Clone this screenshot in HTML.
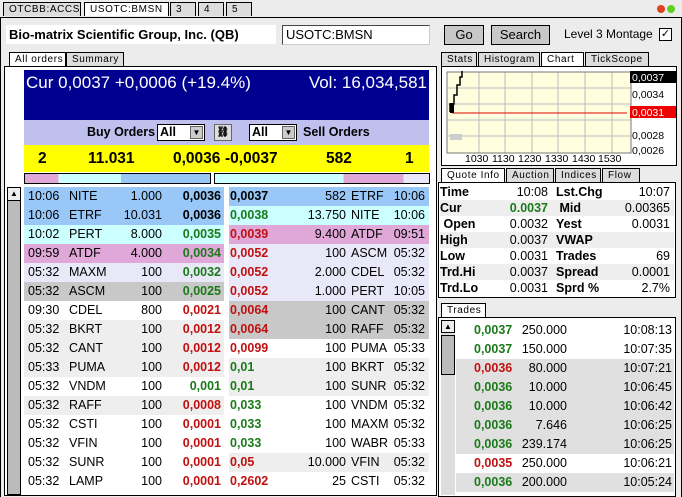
<!DOCTYPE html><html><head><style>
*{margin:0;padding:0;box-sizing:border-box}
body{width:682px;height:495px;background:#ececec;font-family:"Liberation Sans",sans-serif;position:relative;overflow:hidden;font-size:13px}
.a{position:absolute}
.tab{position:absolute;height:14px;border:1px solid #000;border-bottom:none;background:#ddd;font-size:10px;letter-spacing:.6px;padding:1px 0 0 5px;line-height:12px;white-space:nowrap;overflow:hidden}
.row{position:absolute;height:19px;line-height:19px;font-size:12.5px;width:200px}
.row span{position:absolute;white-space:nowrap}
.g{color:#1a7a1a;font-weight:bold}.r{color:#c01010;font-weight:bold}.k{font-weight:bold}
.qr{position:absolute;left:440px;width:234px;height:16px;line-height:16px;font-size:12.5px}
.qr span{position:absolute}
.tr{position:absolute;left:456px;width:218px;height:19px;line-height:19px;font-size:12.5px}
.tr span{position:absolute}
</style></head><body>
<div class="tab" style="left:3px;top:2px;width:78px;background:#ddd">OTCBB:ACCS</div>
<div class="tab" style="left:84px;top:2px;width:85px;background:#fff">USOTC:BMSN</div>
<div class="tab" style="left:170px;top:2px;width:26px">3</div>
<div class="tab" style="left:198px;top:2px;width:26px">4</div>
<div class="tab" style="left:226px;top:2px;width:26px">5</div>
<div class="a" style="left:657px;top:5px;width:8px;height:8px;border-radius:50%;background:#e04020"></div>
<div class="a" style="left:667px;top:5px;width:8px;height:8px;border-radius:50%;background:#60d020"></div>
<div class="a" style="left:0;top:17px;width:682px;height:480px;border:1px solid #000;border-bottom:none"></div>
<div class="a" style="left:6px;top:25px;width:270px;height:19px;background:#fff;font-weight:bold;font-size:13px;line-height:19px;padding-left:3px">Bio-matrix Scientific Group, Inc. (QB)</div>
<div class="a" style="left:282px;top:25px;width:148px;height:20px;background:#fff;border:1px solid #444;border-right-color:#ccc;border-bottom-color:#ccc;font-size:13px;line-height:18px;padding-left:3px">USOTC:BMSN</div>
<div class="a" style="left:444px;top:25px;width:40px;height:20px;background:#c8c8c8;border:1px solid #000;text-align:center;line-height:18px;font-size:13px">Go</div>
<div class="a" style="left:491px;top:25px;width:59px;height:20px;background:#c8c8c8;border:1px solid #000;text-align:center;line-height:18px;font-size:13px">Search</div>
<div class="a" style="left:564px;top:27px;font-size:12px;white-space:nowrap">Level 3 Montage</div>
<div class="a" style="left:659px;top:28px;width:13px;height:13px;background:#fff;border:1px solid #000;font-size:11px;line-height:11px;text-align:center">✓</div>
<div class="tab" style="left:9px;top:52px;width:57px;background:#fff">All orders</div>
<div class="tab" style="left:66px;top:52px;width:58px">Summary</div>
<div class="a" style="left:4px;top:66px;width:433px;height:430px;border:1px solid #000;background:#fff"></div>
<div class="a" style="left:24px;top:70px;width:405px;height:50px;background:#000090;color:#fff;font-size:17px;padding:3px 0 0 2px">Cur 0,0037 +0,0006 (+19.4%)<span style="position:absolute;right:2px">Vol: 16,034,581</span></div>
<div class="a" style="left:24px;top:120px;width:405px;height:25px;background:#bfc0ee;font-weight:bold;font-size:12.5px;line-height:25px">
<span class="a" style="left:63px">Buy Orders</span>
<span class="a" style="left:133px;top:4px;width:48px;height:17px;background:#fff;border:1px solid #000;line-height:15px;padding-left:2px">All<span class="a" style="right:1px;top:1px;width:13px;height:13px;background:#ccc;border:1px solid #666;font-size:8px;line-height:12px;text-align:center">▼</span></span>
<span class="a" style="left:190px;top:4px;width:18px;height:17px;background:#ddd;border:1px solid #666;font-size:10px;line-height:15px;text-align:center">⛓</span>
<span class="a" style="left:225px;top:4px;width:48px;height:17px;background:#fff;border:1px solid #000;line-height:15px;padding-left:2px">All<span class="a" style="right:1px;top:1px;width:13px;height:13px;background:#ccc;border:1px solid #666;font-size:8px;line-height:12px;text-align:center">▼</span></span>
<span class="a" style="left:279px">Sell Orders</span></div>
<div class="a" style="left:24px;top:145px;width:405px;height:27px;background:#ffff00;font-weight:bold;font-size:15.5px;line-height:27px">
<span class="a" style="left:14px">2</span><span class="a" style="left:64px">11.031</span><span class="a" style="left:149px">0,0036</span><span class="a" style="left:201px">-0,0037</span><span class="a" style="left:302px">582</span><span class="a" style="left:381px">1</span></div>
<div class="a" style="left:24px;top:173px;width:187px;height:11px;border:1px solid #000;background:linear-gradient(90deg,#e0a8d8 0 18%,#ccffff 18% 52%,#99c8f8 52%)"></div>
<div class="a" style="left:214px;top:173px;width:216px;height:11px;border:1px solid #000;background:linear-gradient(90deg,#ccffff 0 60%,#e0a8d8 60% 88%,#e8e8f8 88%)"></div>
<div class="a" style="left:7px;top:187px;width:14px;height:308px;background:#bbb;border:1px solid #000"></div>
<div class="a" style="left:8px;top:188px;width:12px;height:13px;background:#eee;border-bottom:1px solid #000;font-size:8px;text-align:center;line-height:12px">▲</div>
<div id="L"></div>
<div class="tab" style="left:441px;top:52px;width:36px">Stats</div>
<div class="tab" style="left:478px;top:52px;width:62px">Histogram</div>
<div class="tab" style="left:541px;top:52px;width:43px;background:#fff">Chart</div>
<div class="tab" style="left:585px;top:52px;width:64px">TickScope</div>
<div class="a" style="left:441px;top:66px;width:236px;height:100px;border:1px solid #000;background:#fff"></div>
<svg class="a" style="left:442px;top:67px" width="234" height="98">
<rect x="5" y="5" width="184" height="81" fill="#ffffe0"/>
<g stroke="#bbb" stroke-width="1">
<line x1="5" y1="21" x2="189" y2="21"/><line x1="5" y1="37" x2="189" y2="37"/><line x1="5" y1="53" x2="189" y2="53"/><line x1="5" y1="69" x2="189" y2="69"/>
<line x1="37" y1="5" x2="37" y2="86"/><line x1="63" y1="5" x2="63" y2="86"/><line x1="90" y1="5" x2="90" y2="86"/><line x1="116" y1="5" x2="116" y2="86"/><line x1="143" y1="5" x2="143" y2="86"/><line x1="170" y1="5" x2="170" y2="86"/></g>
<rect x="5" y="5" width="184" height="81" fill="none" stroke="#777"/>
<line x1="10" y1="46" x2="185" y2="46" stroke="#d00"/>
<path d="M8 45 V37 H12 V28 H15 V18 H18 V10 H20 V4 M10 45 V37" stroke="#000" fill="none" stroke-width="1.5"/>
<rect x="8" y="36" width="4" height="10" fill="#000"/>
<rect x="8" y="67" width="12" height="6" fill="#ccc"/>
<rect x="188" y="4" width="46" height="12" fill="#000"/><text x="190" y="14" fill="#fff" font-size="10.5" font-family="Liberation Sans">0,0037</text>
<g font-family="Liberation Sans" font-size="10.5"><text x="190" y="31">0,0034</text><text x="190" y="47">0,0032</text></g>
<rect x="188" y="39" width="46" height="12" fill="#e00"/><text x="190" y="49" fill="#fff" font-size="10.5" font-family="Liberation Sans">0,0031</text>
<g font-family="Liberation Sans" font-size="10.5"><text x="190" y="72">0,0028</text><text x="190" y="87">0,0026</text>
<text x="23" y="95">1030</text><text x="50" y="95">1130</text><text x="76" y="95">1230</text><text x="103" y="95">1330</text><text x="130" y="95">1430</text><text x="156" y="95">1530</text></g>
</svg>
<div class="tab" style="left:441px;top:168px;width:64px;background:#fff">Quote Info</div>
<div class="tab" style="left:506px;top:168px;width:48px">Auction</div>
<div class="tab" style="left:555px;top:168px;width:46px">Indices</div>
<div class="tab" style="left:602px;top:168px;width:38px">Flow</div>
<div class="a" style="left:438px;top:182px;width:238px;height:116px;border:1px solid #000;background:#fff"></div>
<div id="Q"></div>
<div class="tab" style="left:441px;top:303px;width:45px;background:#fff">Trades</div>
<div class="a" style="left:438px;top:317px;width:238px;height:180px;border:1px solid #000;background:#fff"></div>
<div class="a" style="left:441px;top:320px;width:14px;height:175px;background:#ddd"></div>
<div class="a" style="left:441px;top:320px;width:14px;height:13px;background:#eee;border:1px solid #000;font-size:8px;text-align:center;line-height:11px">▲</div>
<div class="a" style="left:441px;top:335px;width:14px;height:40px;background:#bbb;border:1px solid #000"></div>
<div id="T"></div>
<script>
var b=[["10:06","NITE","1.000","0,0036","k","#99c8f8"],["10:06","ETRF","10.031","0,0036","k","#99c8f8"],["10:02","PERT","8.000","0,0035","g","#ccffff"],["09:59","ATDF","4.000","0,0034","g","#e0a8d8"],["05:32","MAXM","100","0,0032","g","#e8e8f8"],["05:32","ASCM","100","0,0025","g","#c8c8c8"],["09:30","CDEL","800","0,0021","r","#fff"],["05:32","BKRT","100","0,0012","r","#eee"],["05:32","CANT","100","0,0012","r","#eee"],["05:33","PUMA","100","0,0012","r","#eee"],["05:32","VNDM","100","0,001","g","#fff"],["05:32","RAFF","100","0,0008","r","#eee"],["05:32","CSTI","100","0,0001","r","#fff"],["05:32","VFIN","100","0,0001","r","#fff"],["05:32","SUNR","100","0,0001","r","#fff"],["05:32","LAMP","100","0,0001","r","#fff"]];
var s=[["0,0037","k","582","ETRF","10:06","#99c8f8"],["0,0038","g","13.750","NITE","10:06","#ccffff"],["0,0039","r","9.400","ATDF","09:51","#e0a8d8"],["0,0052","r","100","ASCM","05:32","#e8e8f8"],["0,0052","r","2.000","CDEL","05:32","#e8e8f8"],["0,0052","r","1.000","PERT","10:05","#e8e8f8"],["0,0064","r","100","CANT","05:32","#c8c8c8"],["0,0064","r","100","RAFF","05:32","#c8c8c8"],["0,0099","r","100","PUMA","05:33","#fff"],["0,01","g","100","BKRT","05:32","#eee"],["0,01","g","100","SUNR","05:32","#eee"],["0,033","g","100","VNDM","05:32","#fff"],["0,033","g","100","MAXM","05:32","#fff"],["0,033","g","100","WABR","05:33","#fff"],["0,05","r","10.000","VFIN","05:32","#eee"],["0,2602","r","25","CSTI","05:32","#fff"]];
var h="";
b.forEach(function(r,i){var y=187+i*19;h+='<div class="row" style="left:24px;top:'+y+'px;background:'+r[5]+'"><span style="left:4px">'+r[0]+'</span><span style="left:45px">'+r[1]+'</span><span style="right:62px">'+r[2]+'</span><span class="'+r[4]+'" style="right:3px">'+r[3]+'</span></div>';});
s.forEach(function(r,i){var y=187+i*19;h+='<div class="row" style="left:229px;top:'+y+'px;background:'+r[5]+'"><span class="'+r[1]+'" style="left:1px">'+r[0]+'</span><span style="right:83px">'+r[2]+'</span><span style="left:122px">'+r[3]+'</span><span style="right:4px">'+r[4]+'</span></div>';});
document.getElementById("L").innerHTML=h;
var q=[["Time","10:08","Lst.Chg","10:07"],["Cur","0.0037"," Mid","0.00365"],[" Open","0.0032","Yest","0.0031"],["High","0.0037","VWAP",""],["Low","0.0031","Trades","69"],["Trd.Hi","0.0037","Spread","0.0001"],["Trd.Lo","0.0031","Sprd %","2.7%"]];
h="";q.forEach(function(r,i){h+='<div class="qr" style="top:'+(184+i*16)+'px;background:'+(i%2?'#eee':'#fff')+'"><span class="k" style="left:0">'+r[0].replace(" ","&nbsp;")+'</span><span '+(i==1?'class="g" ':'')+'style="right:126px">'+r[1]+'</span><span class="k" style="left:116px">'+r[2].replace(" ","&nbsp;")+'</span><span style="right:4px">'+r[3]+'</span></div>';});
document.getElementById("Q").innerHTML=h;
var t=[["0,0037","g","250.000","10:08:13","#fff"],["0,0037","g","150.000","10:07:35","#fff"],["0,0036","r","80.000","10:07:21","#e0e0e0"],["0,0036","g","10.000","10:06:45","#e0e0e0"],["0,0036","g","10.000","10:06:42","#e0e0e0"],["0,0036","g","7.646","10:06:25","#e0e0e0"],["0,0036","g","239.174","10:06:25","#e0e0e0"],["0,0035","r","250.000","10:06:21","#fff"],["0,0036","g","200.000","10:05:24","#e0e0e0"]];
h="";t.forEach(function(r,i){h+='<div class="tr" style="top:'+(321+i*19)+'px;background:'+r[4]+'"><span class="'+r[1]+'" style="left:18px">'+r[0]+'</span><span style="right:107px">'+r[2]+'</span><span style="right:2px">'+r[3]+'</span></div>';});
document.getElementById("T").innerHTML=h;
</script>
</body></html>
